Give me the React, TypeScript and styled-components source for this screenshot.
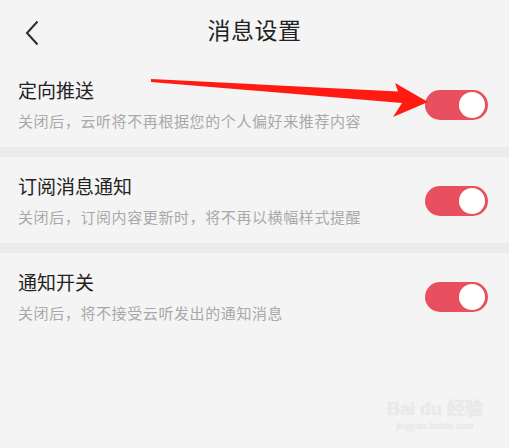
import React from 'react'
import styled, { createGlobalStyle } from 'styled-components'

const GlobalStyle = createGlobalStyle`
  html, body {
    margin: 0;
    padding: 0;
    background: #ffffff;
  }
  body {
    font-family: 'Noto Sans CJK SC', 'Noto Sans', sans-serif;
  }
`

const Page = styled.div`
  position: relative;
  width: 509px;
  height: 448px;
  background: #f4f4f4;
  overflow: hidden;
`

const Header = styled.div`
  position: relative;
  display: flex;
  align-items: center;
  justify-content: center;
  height: 61px;
`

const BackButton = styled.div`
  position: absolute;
  left: 22px;
  top: 19px;
  width: 20px;
  height: 28px;
  display: flex;
  align-items: center;
  justify-content: center;
`

const Title = styled.h1`
  margin: 0 0 4px;
  font-size: 23px;
  font-weight: 400;
  color: #222222;
  letter-spacing: 0.5px;
`

const Row = styled.div`
  display: flex;
  align-items: center;
  justify-content: space-between;
  padding: 17px 21px 16px 18px;
`

const Texts = styled.div`
  display: flex;
  flex-direction: column;
  gap: 9px;
`

const RowTitle = styled.div`
  font-size: 19px;
  line-height: 24px;
  color: #222222;
`

const RowDesc = styled.div`
  font-size: 15px;
  line-height: 20px;
  color: #a9a9a9;
  letter-spacing: 0.6px;
`

const Band = styled.div`
  height: 10px;
  background: #ebebec;
`

const Toggle = styled.div<{ $on: boolean }>`
  box-sizing: border-box;
  width: 63px;
  height: 30px;
  border-radius: 15px;
  padding: 2px 3px;
  background: ${({ $on }) => ($on ? '#e9505f' : '#d8d8d8')};
  display: flex;
  justify-content: ${({ $on }) => ($on ? 'flex-end' : 'flex-start')};
  align-items: center;
`

const Knob = styled.div`
  width: 26px;
  height: 26px;
  border-radius: 50%;
  background: #ffffff;
`

const Arrow = styled.svg`
  position: absolute;
  left: 0;
  top: 0;
  pointer-events: none;
`

const Watermark = styled.div`
  position: absolute;
  right: 26px;
  bottom: 16px;
  display: flex;
  flex-direction: column;
  align-items: center;
  color: #eaeaea;
  font-family: 'Liberation Sans', 'Noto Sans CJK SC', sans-serif;
  text-shadow: 0 0 1px #dddddd;
`

const MarkLine = styled.div`
  font-size: 18px;
  font-weight: 700;
  line-height: 22px;
`

const MarkSub = styled.div`
  font-size: 9px;
  line-height: 12px;
  letter-spacing: 0.3px;
`

const settings = [
  { title: '定向推送', desc: '关闭后，云听将不再根据您的个人偏好来推荐内容' },
  { title: '订阅消息通知', desc: '关闭后，订阅内容更新时，将不再以横幅样式提醒' },
  { title: '通知开关', desc: '关闭后，将不接受云听发出的通知消息' },
]

export default function App() {
  return (
    <>
      <GlobalStyle />
      <Page>
        <Header>
          <BackButton>
            <svg width="14" height="26" viewBox="0 0 14 26">
              <path d="M12.5 1.5 L2 13 L12.5 24.5" fill="none" stroke="#2b2b2b" strokeWidth="2" />
            </svg>
          </BackButton>
          <Title>消息设置</Title>
        </Header>
        {settings.map((s, i) => (
          <React.Fragment key={s.title}>
            {i > 0 && <Band />}
            <Row>
              <Texts>
                <RowTitle>{s.title}</RowTitle>
                <RowDesc>{s.desc}</RowDesc>
              </Texts>
              <Toggle $on>
                <Knob />
              </Toggle>
            </Row>
          </React.Fragment>
        ))}
        <Watermark>
          <MarkLine>Bai du 经验</MarkLine>
          <MarkSub>jingyan.baidu.com</MarkSub>
        </Watermark>
        <Arrow width="509" height="448" viewBox="0 0 509 448">
          <polygon
            points="151,79 398,91.5 395,83 428,102 393,117 402,103 151,82"
            fill="#ff1a12"
          />
        </Arrow>
      </Page>
    </>
  )
}
